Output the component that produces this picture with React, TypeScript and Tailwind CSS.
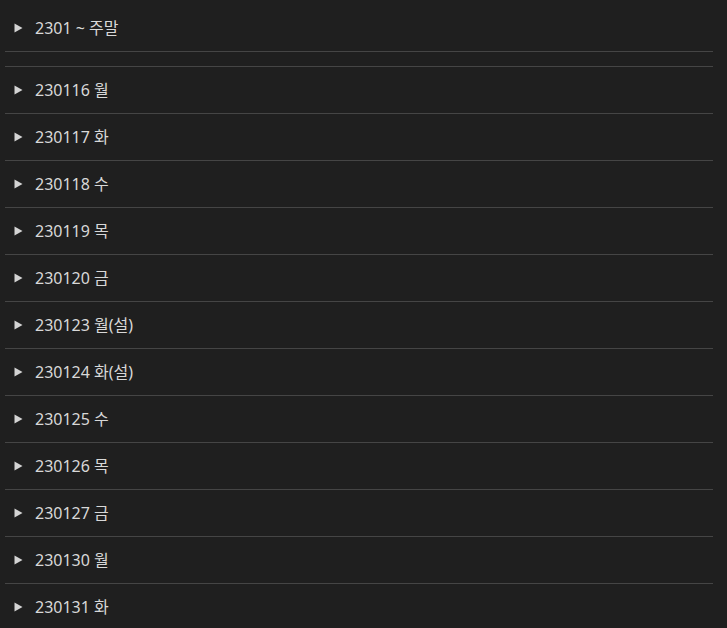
const rows = [
  "230116 월",
  "230117 화",
  "230118 수",
  "230119 목",
  "230120 금",
  "230123 월(설)",
  "230124 화(설)",
  "230125 수",
  "230126 목",
  "230127 금",
  "230130 월",
  "230131 화",
];

const Row = ({ label }: { label: string }) => {
  return (
    <div className="flex h-[47px] items-center border-b border-[#454545] pl-[9px]">
      <svg width="9" height="10" viewBox="0 0 9 10" className="shrink-0">
        <polygon points="0.5,0.5 8.5,5 0.5,9.5" fill="#d4d4d4" />
      </svg>
      <span className="ml-[12px] text-[16px] text-[#d8d8d8]">{label}</span>
    </div>
  );
};

export default function App() {
  return (
    <div
      className="h-[628px] w-[727px] overflow-hidden bg-[#1f1f1f] pl-[5px] pr-[14px] pt-[5px]"
      style={{ fontFamily: '"Noto Sans", "Noto Sans CJK KR", sans-serif' }}
    >
      <Row label="2301 ~ 주말" />
      <div className="h-[15px] border-b border-[#454545]" />
      {rows.map((r) => (
        <Row key={r} label={r} />
      ))}
    </div>
  );
}
